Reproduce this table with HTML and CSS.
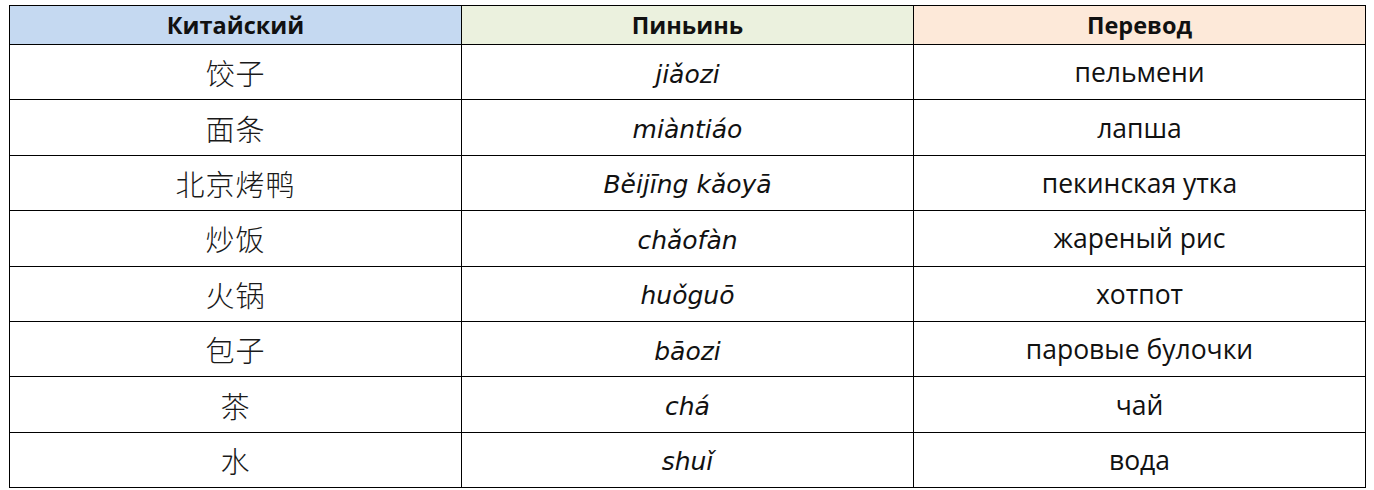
FILE: index.html
```html
<!DOCTYPE html>
<html lang="ru">
<head>
<meta charset="utf-8">
<link rel="stylesheet" href="styles.css">
</head>
<body>
<table class="vocab">
  <thead>
    <tr>
      <th class="h-zh">Китайский</th>
      <th class="h-py">Пиньинь</th>
      <th class="h-ru">Перевод</th>
    </tr>
  </thead>
  <tbody>
    <tr><td class="zh">饺子</td><td class="py">jiǎozi</td><td class="ru">пельмени</td></tr>
    <tr><td class="zh">面条</td><td class="py">miàntiáo</td><td class="ru">лапша</td></tr>
    <tr><td class="zh">北京烤鸭</td><td class="py">Běijīng kǎoyā</td><td class="ru">пекинская утка</td></tr>
    <tr><td class="zh">炒饭</td><td class="py">chǎofàn</td><td class="ru">жареный рис</td></tr>
    <tr><td class="zh">火锅</td><td class="py">huǒguō</td><td class="ru">хотпот</td></tr>
    <tr><td class="zh">包子</td><td class="py">bāozi</td><td class="ru">паровые булочки</td></tr>
    <tr><td class="zh">茶</td><td class="py">chá</td><td class="ru">чай</td></tr>
    <tr><td class="zh">水</td><td class="py">shuǐ</td><td class="ru">вода</td></tr>
  </tbody>
</table>
</body>
</html>
```
FILE: styles.css
```css
html, body {
  margin: 0;
  padding: 0;
  background: #ffffff;
}

body {
  padding: 5px 0 0 9px;
  font-family: "Open Sans", "Noto Sans", sans-serif;
  color: #000;
}

.vocab {
  border-collapse: collapse;
  width: 1357px;
  table-layout: fixed;
}

.vocab th,
.vocab td {
  border: 1.5px solid #000;
  text-align: center;
  vertical-align: middle;
  padding: 0;
}

.vocab thead tr {
  height: 39px;
}

.vocab tbody tr {
  height: 55.4px;
}

.vocab th {
  font-family: "Open Sans", sans-serif;
  font-weight: 700;
  font-size: 23.5px;
  color: #111;
}

.h-zh { background: #c5d9f1; }
.h-py { background: #ebf1de; }
.h-ru { background: #fde9d9; }

.zh {
  font-family: "Noto Sans CJK SC", sans-serif;
  font-weight: 300;
  font-size: 29px;
  letter-spacing: 1px;
  color: #1a1a1a;
}

.vocab td.py {
  font-family: "DejaVu Sans", sans-serif;
  font-style: italic;
  font-size: 25px;
  color: #111;
  padding-top: 4px;
}

.ru {
  font-family: "Open Sans", sans-serif;
  font-size: 26.5px;
  color: #111;
}
```
